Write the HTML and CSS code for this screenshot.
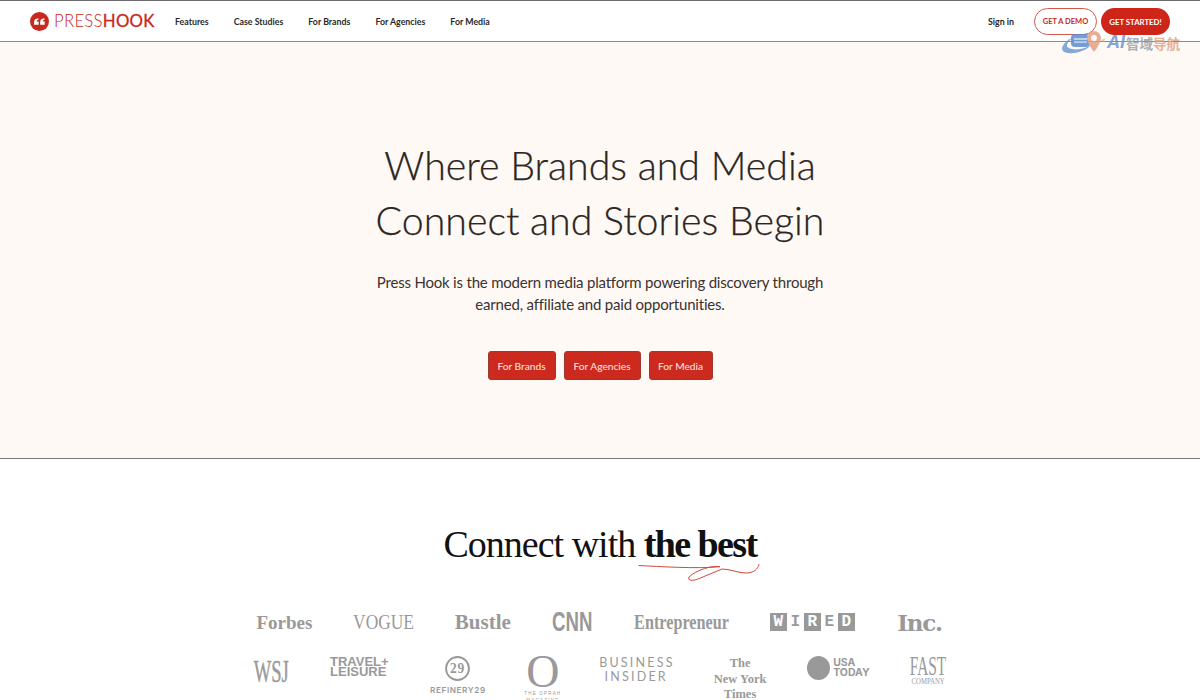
FILE: index.html
```html
<!DOCTYPE html>
<html lang="en">
<head>
<meta charset="utf-8">
<title>Press Hook</title>
<link rel="stylesheet" href="styles.css">
</head>
<body>
<header class="topbar">
  <a class="brand">
    <svg class="brand-mark" viewBox="0 0 20 20" width="19" height="19"><circle cx="10" cy="10" r="10" fill="#c9281c"/><path d="M4.300 13.500V10.300C4.300 8 5.800 6.800 8.800 6.500V8.200C7.700 8.400 7.200 8.900 7.200 9.900H9.100V13.500Z" fill="#fff"/><path d="M10.700 13.500V10.300C10.700 8 12.200 6.800 15.200 6.500V8.200C14.100 8.400 13.600 8.900 13.600 9.900H15.500V13.500Z" fill="#fff"/></svg>
    <span class="brand-name">PRESS<b>HOOK</b></span>
  </a>
  <nav class="nav">
    <a>Features</a><a>Case Studies</a><a>For Brands</a><a>For Agencies</a><a>For Media</a>
  </nav>
  <div class="actions">
    <a class="signin">Sign in</a>
    <a class="pill pill-outline">GET A DEMO</a>
    <a class="pill pill-solid">GET STARTED!</a>
  </div>
  <div class="watermark">
    <svg class="wm-icon" viewBox="0 0 46 24" width="46" height="24"><path d="M1 18C3 12 8 9 13 7C6 12 4 16 8 18C14 21 24 19 30 15C25 21 14 24 7 23C3 22.500 1 21 1 18Z" fill="#6f9bd4"/><rect x="10" y="4" width="19" height="13" rx="4" fill="#5d8ecf"/><path d="M13 9h13M13 12h13" stroke="#cfe0f4" stroke-width="1.500"/><path d="M33 1a7 7 0 0 1 7 7c0 5-7 14-7 14s-7-9-7-14a7 7 0 0 1 7-7z" fill="#e3a283"/><circle cx="33" cy="8" r="3" fill="#fdf6f1"/><path d="M40 10l5-2-3 4z" fill="#e8c08a"/></svg>
    <span class="wm-ai">AI</span><span class="wm-a">智域</span><span class="wm-b">导航</span>
  </div>
</header>

<section class="hero">
  <h1>Where Brands and Media<br>Connect and Stories Begin</h1>
  <p>Press Hook is the modern media platform powering discovery through<br>earned, affiliate and paid opportunities.</p>
  <div class="cta-row">
    <a class="cta cta-brands">For Brands</a><a class="cta cta-agencies">For Agencies</a><a class="cta cta-media">For Media</a>
  </div>
</section>

<section class="partners">
  <h2>Connect with <span class="best">the best<svg class="swash" viewBox="0 0 124 22" width="124" height="22"><path d="M.5 4.500C20 5.500 60 8 82 5.700C75 4 58 9 51 16C49 20 55 20 60 18C68 15 76 11 84 8C92 8 100 12 108 12C116 12 120 8 121 3" fill="none" stroke="#d4493c" stroke-width="1"/></svg></span></h2>
  <div class="logos logos-a">
    <span class="logo forbes">Forbes</span>
    <span class="logo vogue"><span>VOGUE</span></span>
    <span class="logo bustle">Bustle</span>
    <span class="logo cnn"><span>CNN</span></span>
    <span class="logo entre"><span>Entrepreneur</span></span>
    <span class="logo wired"><i>W</i><b>I</b><i>R</i><b>E</b><i>D</i></span>
    <span class="logo inc">Inc.</span>
  </div>
  <div class="logos logos-b">
    <span class="logo wsj"><span>WSJ</span></span>
    <span class="logo tl">TRAVEL+<br>LEISURE</span>
    <span class="logo r29"><svg viewBox="0 0 24 24" width="25" height="25"><circle cx="12" cy="12" r="11" fill="none" stroke="#999" stroke-width="1.800"/><text x="12" y="16.500" text-anchor="middle" class="r29-num">29</text></svg><span>REFINERY29</span></span>
    <span class="logo oprah"><span class="o">O</span><small>THE OPRAH<br>MAGAZINE</small></span>
    <span class="logo bi">BUSINESS<br>INSIDER</span>
    <span class="logo nyt">The<br>New York<br>Times</span>
    <span class="logo usa"><i></i><span>USA<br>TODAY</span></span>
    <span class="logo fast"><span class="fast-top">FAST</span><span class="fast-sub">COMPANY</span></span>
  </div>
</section>
</body>
</html>
```
FILE: styles.css
```css
* { box-sizing: border-box; }
html, body { margin: 0; height: 700px; overflow: hidden; }
body { background: #fff; font-family: "Lato", "Liberation Sans", sans-serif; color: #2b2523; }
a { color: inherit; text-decoration: none; }

.topbar { position: relative; height: 42px; display: flex; align-items: center; padding: 1px 30px 0; border-top: 1px solid #6b6b6b; border-bottom: 1px solid #8a8a8a; background: #fff; }
.brand { display: flex; align-items: center; gap: 5px; width: 145px; }
.brand-mark { flex: none; }
.brand-name { font-family: "Lato", sans-serif; font-size: 16.800px; font-weight: 300; letter-spacing: .25px; color: #c9281c; line-height: 1; }
.brand-name b { font-weight: 400; color: #c9281c; -webkit-text-stroke: .3px #c9281c; }
.nav { display: flex; gap: 25px; font-family: "Lato", sans-serif; font-size: 8.800px; font-weight: 700; color: #2a2a2a; }
.actions { margin-left: auto; display: flex; align-items: center; font-family: "Lato", sans-serif; }
.signin { font-size: 8.800px; font-weight: 700; margin-right: 20px; }
.pill { height: 27px; border-radius: 14px; display: flex; align-items: center; justify-content: center; font-weight: 700; }
.pill-outline { width: 63px; border: 1.500px solid #d2584d; color: #c9281c; margin-right: 4px; font-size: 7.500px; }
.pill-solid { width: 69px; background: #cf2418; color: #fff; font-size: 7.800px; }
.watermark { position: absolute; left: 1061px; top: 29px; height: 24px; display: flex; align-items: center; font-family: "Noto Sans CJK SC", sans-serif; font-size: 13.500px; font-weight: 700; line-height: 1; opacity: .85; }
.wm-ai { font-family: "Liberation Sans", sans-serif; font-style: italic; font-weight: 700; font-size: 18px; color: #7095d6; margin-right: 1px; }
.wm-a { color: #9aa3ad; padding-top: 3px; }
.wm-b { color: #dfa585; padding-top: 3px; }

.hero { height: 417px; background: #fff9f5; border-bottom: 1px solid #777; text-align: center; padding-top: 95px; }
.hero h1 { margin: 0; font-family: "Lato", sans-serif; font-weight: 300; font-size: 39.300px; line-height: 55px; color: #2b2523; -webkit-text-stroke: .25px #2b2523; }
.hero p { margin: 24px 0 0; font-family: "Lato", sans-serif; font-size: 15px; line-height: 22px; letter-spacing: -.2px; color: #3a3331; }
.cta-row { display: flex; justify-content: center; gap: 8px; margin-top: 36px; }
.cta { height: 29px; display: flex; align-items: center; justify-content: center; background: #cc2a1e; border: 1px solid #9c3a30; border-radius: 3px; color: #fde9e2; font-size: 10.200px; font-family: "Lato", sans-serif; }
.cta-brands { width: 68px; }
.cta-agencies { width: 77px; }
.cta-media { width: 64px; }

.partners { text-align: center; padding-top: 60px; }
.partners h2 { margin: 0; font-family: "Liberation Serif", serif; font-weight: 400; font-size: 38px; line-height: 50px; letter-spacing: -1px; color: #111; }
.best { position: relative; display: inline-block; font-weight: 700; letter-spacing: -1.600px; }
.swash { position: absolute; left: -6px; top: 42px; }
.logos { display: flex; justify-content: center; color: #999; white-space: nowrap; }
.logos-a { height: 40px; margin-top: 33px; gap: 40.700px; align-items: center; }
.logos-b { margin-top: 14px; gap: 40.400px; align-items: flex-start; }
.logo { display: flex; justify-content: center; line-height: 1; flex: none; }
.logo > span { display: block; }
.forbes { width: 56px; font-family: "Liberation Serif", serif; font-weight: 700; font-size: 19px; }
.bustle { width: 56px; font-family: "Liberation Serif", serif; font-weight: 700; font-size: 21px; }
.vogue { width: 61px; font-family: "Liberation Serif", serif; font-size: 22px; }
.vogue span { transform: scaleX(.79); }
.cnn { width: 42px; font-family: "Liberation Sans", sans-serif; font-weight: 700; font-size: 27px; }
.cnn span { transform: scaleX(.69); }
.entre { width: 95px; font-family: "Liberation Serif", serif; font-weight: 700; font-size: 20px; }
.entre span { transform: scaleX(.81); }
.wired { width: 85px; font-family: "Liberation Mono", monospace; font-weight: 700; font-size: 16px; }
.wired i, .wired b { width: 17px; height: 18px; display: flex; align-items: center; justify-content: center; font-style: normal; }
.wired i { background: #999; color: #fff; }
.inc { width: 48px; font-family: "DejaVu Serif", serif; font-weight: 700; font-size: 23px; letter-spacing: -1.200px; }
.wsj { width: 36px; font-family: "Liberation Serif", serif; font-size: 31px; -webkit-text-stroke: .4px #999; }
.wsj span { transform: scaleX(.6); }
.tl { width: 59px; display: block; font-family: "Liberation Sans", sans-serif; font-weight: 700; font-size: 13px; line-height: 10px; text-align: left; padding-top: 1px; }
.r29 { width: 57px; flex-direction: column; align-items: center; gap: 5px; font-family: "Inter", sans-serif; font-size: 8.200px; font-weight: 600; letter-spacing: .6px; }
.r29-num { font-family: "Liberation Serif", serif; font-size: 13px; font-weight: 700; fill: #999; }
.oprah { width: 32px; flex-direction: column; align-items: center; }
.oprah .o { font-family: "Liberation Serif", serif; font-size: 46px; line-height: 32px; }
.oprah small { display: block; font-size: 4.500px; letter-spacing: 1.200px; line-height: 7px; margin-top: 2px; font-family: "Liberation Sans", sans-serif; text-align: center; }
.bi { width: 74px; display: block; font-family: "Lato", sans-serif; font-size: 12.500px; letter-spacing: 2.200px; line-height: 14px; text-align: center; }
.nyt { width: 53px; display: block; font-family: "Liberation Serif", serif; font-weight: 700; font-size: 12.500px; line-height: 15.500px; text-align: center; }
.usa { width: 63px; align-items: center; gap: 3px; font-family: "Inter", sans-serif; font-weight: 700; font-size: 10.500px; line-height: 10px; text-align: left; }
.usa i { width: 23px; height: 24px; border-radius: 50%; background: #999; flex: none; }
.fast { width: 36px; flex-direction: column; align-items: center; font-family: "Liberation Serif", serif; }
.fast-top { font-size: 27px; line-height: 20px; transform: scaleX(.57); }
.fast-sub { font-size: 9px; line-height: 8px; margin-top: 1px; transform: scaleX(.75); }
```
